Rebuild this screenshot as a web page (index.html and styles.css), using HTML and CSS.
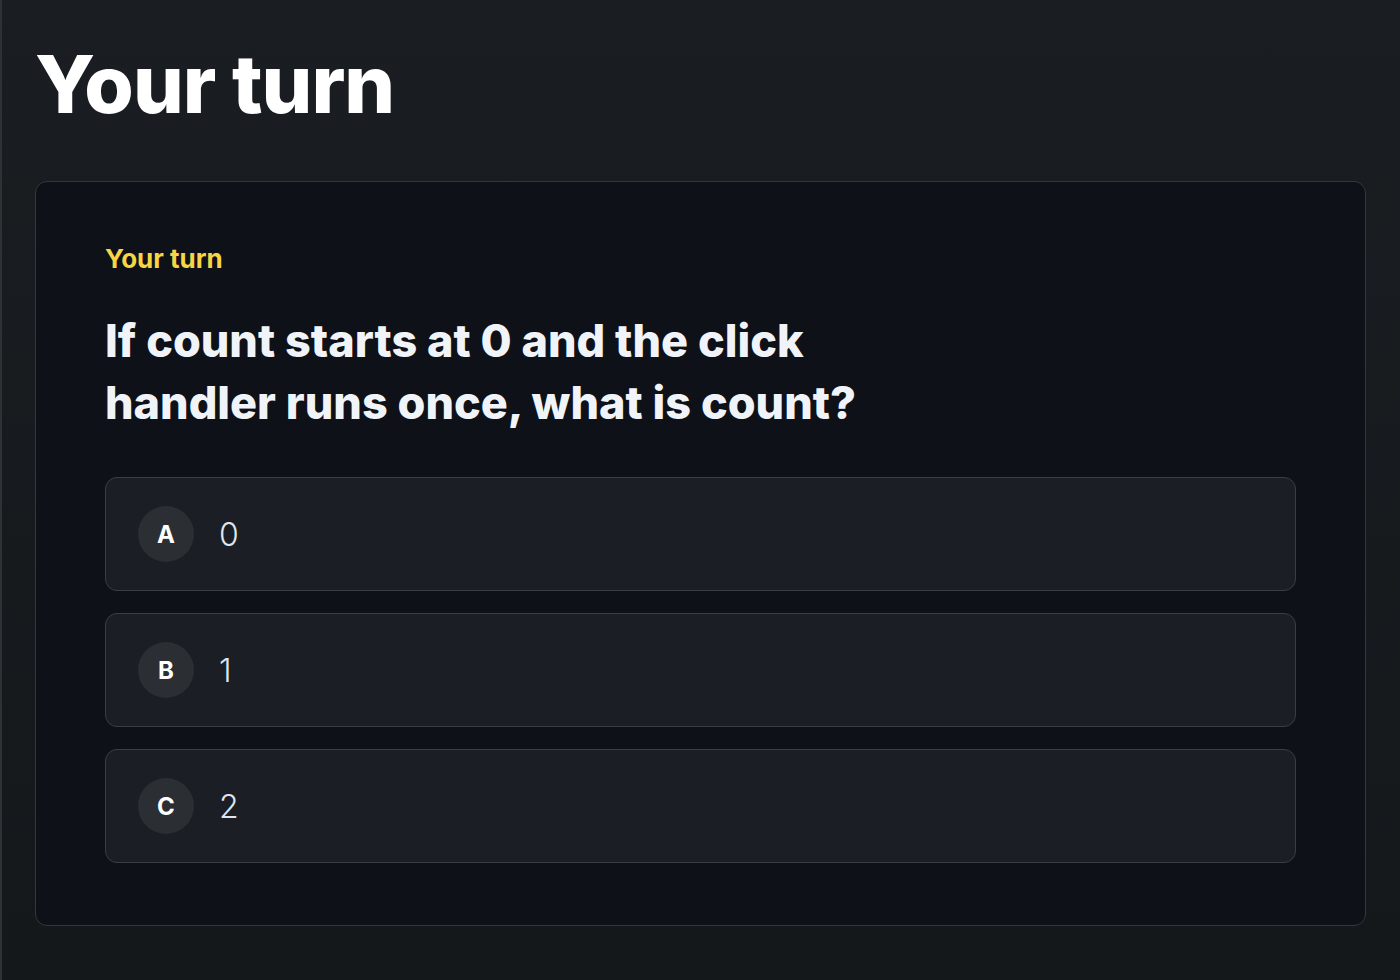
FILE: index.html
```html
<!DOCTYPE html>
<html lang="en">
<head>
    <meta charset="UTF-8">
    <meta name="viewport" content="width=device-width, initial-scale=1.0">
    <title>Your turn</title>
    <link rel="stylesheet" href="styles.css">
</head>
<body>
    <main class="page">
        <h1 class="page-title">Your turn</h1>

        <section class="quiz-card">
            <p class="quiz-label">Your turn</p>
            <h2 class="quiz-question">If count starts at 0 and the click handler runs once, what is count?</h2>

            <div class="options">
                <button class="option">
                    <span class="option-key">A</span>
                    <span class="option-text">0</span>
                </button>
                <button class="option">
                    <span class="option-key">B</span>
                    <span class="option-text">1</span>
                </button>
                <button class="option">
                    <span class="option-key">C</span>
                    <span class="option-text">2</span>
                </button>
            </div>
        </section>
    </main>
</body>
</html>
```

FILE: styles.css
```css
html, body {
    height: 100%;
}

body {
    margin: 0;
    font-family: Inter, "Noto Sans", sans-serif;
    background: linear-gradient(to bottom, #1a1d21, #15181b);
    border-left: 2px solid #2e3136;
    color: #f0f4f8;
    box-sizing: border-box;
}

.page {
    padding: 40px 34px 40px 33px;
}

.page-title {
    margin: 0 0 53px 0;
    font-size: 80px;
    font-weight: 800;
    letter-spacing: -0.012em;
    line-height: 1.1;
    color: #ffffff;
}

.quiz-card {
    background: #0e1118;
    border: 1px solid #34373c;
    border-radius: 12px;
    padding: 60px 69px 62px 69px;
}

.quiz-label {
    margin: 0 0 34px 0;
    color: #f7d543;
    font-size: 26px;
    font-weight: 700;
    line-height: 34px;
}

.quiz-question {
    margin: 0 0 43px 0;
    max-width: 800px;
    font-size: 45px;
    font-weight: 800;
    line-height: 62px;
    color: #f0f4f8;
}

.options {
    display: flex;
    flex-direction: column;
    gap: 22px;
}

.option {
    display: flex;
    align-items: center;
    gap: 25px;
    height: 114px;
    padding: 0 32px;
    background: #1b1e24;
    border: 1px solid #3a3d43;
    border-radius: 12px;
    font-family: inherit;
    text-align: left;
    cursor: pointer;
}

.option-key {
    display: flex;
    align-items: center;
    justify-content: center;
    width: 56px;
    height: 56px;
    border-radius: 50%;
    background: #2b2e33;
    color: #ffffff;
    font-size: 24px;
    font-weight: 700;
}

.option-text {
    color: #dfe5ee;
    font-size: 32px;
    font-weight: 300;
}
```
